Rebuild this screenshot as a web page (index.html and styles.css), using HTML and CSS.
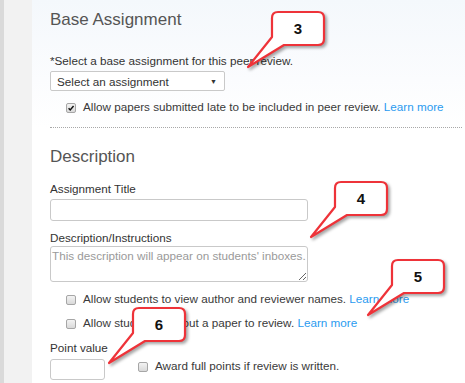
FILE: index.html
```html
<!DOCTYPE html>
<html lang="en">
  <head>
    <meta charset="UTF-8" />
    <meta name="viewport" content="width=device-width, initial-scale=1.0" />
    <link rel="stylesheet" href="styles.css">
  </head>
  <body>
    <div class="page">
      <main class="panel">
        <section class="block block-base">
          <h2>Base Assignment</h2>
          <label class="field-label">*Select a base assignment for this peer review.</label>
          <div class="select">
            <span>Select an assignment</span>
            <span class="caret">&#9660;</span>
          </div>
          <div class="check-row">
            <span class="box is-checked">
              <svg viewBox="0 0 10 10"><path d="M2 5.2 4 7.4 8.2 2.4" /></svg>
            </span>
            <span>Allow papers submitted late to be included in peer review. <a href="#">Learn more</a></span>
          </div>
        </section>

        <section class="block block-desc">
          <h2>Description</h2>
          <label class="field-label" for="title">Assignment Title</label>
          <input id="title" class="text-input title-input" type="text" />
          <label class="field-label desc-label" for="desc">Description/Instructions</label>
          <textarea id="desc" class="text-input desc-input" placeholder="This description will appear on students' inboxes."></textarea>
          <div class="check-row first-option">
            <span class="box"></span>
            <span>Allow students to view author and reviewer names. <a href="#">Learn more</a></span>
          </div>
          <div class="check-row">
            <span class="box"></span>
            <span>Allow students without a paper to review. <a href="#">Learn more</a></span>
          </div>
          <label class="field-label point-label" for="points">Point value</label>
          <div class="point-row">
            <input id="points" class="text-input point-input" type="text" />
            <div class="check-row">
              <span class="box"></span>
              <span>Award full points if review is written.</span>
            </div>
          </div>
        </section>
      </main>

      <!-- annotation callouts -->
      <div class="callout c3">
        <svg viewBox="0 0 90 66"><path d="M34 4H74Q80 4 80 10V31Q80 37 74 37H40L4 59 28 29V10Q28 4 34 4Z" /></svg>
        <span>3</span>
      </div>
      <div class="callout c4">
        <svg viewBox="0 0 90 66"><path d="M34 4H74Q80 4 80 10V31Q80 37 74 37H40L4 59 28 29V10Q28 4 34 4Z" /></svg>
        <span>4</span>
      </div>
      <div class="callout c5">
        <svg viewBox="0 0 90 66"><path d="M34 4H74Q80 4 80 10V31Q80 37 74 37H40L4 59 28 29V10Q28 4 34 4Z" /></svg>
        <span>5</span>
      </div>
      <div class="callout c6">
        <svg viewBox="0 0 90 66"><path d="M34 4H74Q80 4 80 10V31Q80 37 74 37H40L4 59 28 29V10Q28 4 34 4Z" /></svg>
        <span>6</span>
      </div>
    </div>
  </body>
</html>
```

FILE: styles.css
```css
html,
body {
  width: 100%;
  height: 100%;
}

body {
  margin: 0;
  background-color: #f2f2f2;
  font-family: "Liberation Sans", Arial, sans-serif;
  font-size: 11.7px;
  color: #3a3a3a;
  overflow: hidden;
}

.page {
  position: relative;
  display: flex;
  min-height: 100%;
  border-left: 4px solid #dadada;
}

/* Panel */

.panel {
  flex: 1;
  margin-left: 28px;
  padding: 0 3px 0 18px;
  background-image: linear-gradient(to bottom, #f4f8fc 0px, #fbfcfe 80px, white 128px);
}

.block {
  display: flex;
  flex-direction: column;
  align-items: flex-start;
}

.block-base {
  padding: 9px 0 13px;
  border-bottom: 1px dotted #a8a8a8;
}

.block-desc {
  padding-top: 18px;
}

.block h2 {
  margin: 0;
  font-size: 17px;
  line-height: 22px;
  font-weight: normal;
  color: #555;
}

.field-label {
  display: block;
  line-height: 14px;
  color: #333;
}

.block-base .field-label {
  margin-top: 23px;
}

.block-desc .field-label {
  margin-top: 14px;
}

.block-desc .desc-label {
  margin-top: 10px;
}

.block-desc .point-label {
  margin-top: 11px;
}

/* Select */

.select {
  box-sizing: border-box;
  display: flex;
  align-items: center;
  justify-content: space-between;
  width: 175px;
  height: 20px;
  margin-top: 3px;
  padding: 0 7px 0 6px;
  border: 1px solid #c9c9c9;
  border-radius: 2px;
  background-color: white;
  color: #333;
}

.select .caret {
  font-size: 7px;
  color: #333;
}

/* Checkbox rows */

.check-row {
  display: flex;
  align-items: flex-start;
  gap: 7px;
  margin-left: 16px;
  line-height: 14px;
  color: #3a3a3a;
}

.block-base .check-row {
  margin-top: 9px;
}

.block-desc .check-row {
  margin-top: 10px;
}

.check-row a {
  color: #2a9bf0;
  text-decoration: none;
}

.box {
  box-sizing: border-box;
  flex: none;
  width: 10px;
  height: 10px;
  margin-top: 3px;
  border: 1px solid #a6a6a6;
  border-radius: 2px;
  background-image: linear-gradient(to bottom, #f3f3f3, #d9d9d9);
}

.box svg {
  display: block;
  width: 8px;
  height: 8px;
  fill: none;
  stroke: #111;
  stroke-width: 1.8;
}

/* Inputs */

.text-input {
  box-sizing: border-box;
  margin: 3px 0 0;
  padding: 2px 4px;
  border: 1px solid #c9c9c9;
  border-radius: 3px;
  font: inherit;
  color: #333;
  background-color: white;
}

.title-input {
  width: 258px;
  height: 22px;
}

.desc-input {
  width: 258px;
  height: 36px;
  margin-top: 1px;
  padding: 2px 1px;
  line-height: 14px;
}

.desc-input::placeholder {
  color: #9a9a9a;
}

.point-row {
  display: flex;
  align-items: flex-start;
  margin-top: 4px;
}

.point-input {
  width: 55px;
  height: 21px;
  margin: 0;
}

.point-row .check-row {
  margin: 0 0 0 33px;
}

/* Callouts */

.callout {
  position: absolute;
  width: 90px;
  height: 66px;
}

.callout svg {
  display: block;
  width: 90px;
  height: 66px;
  overflow: visible;
  filter: drop-shadow(2px 2px 1.5px rgba(0, 0, 0, 0.35));
}

.callout path {
  fill: white;
  stroke: #ee3339;
  stroke-width: 2.2;
  stroke-linejoin: round;
}

.callout span {
  position: absolute;
  top: 4px;
  left: 28px;
  width: 52px;
  height: 32px;
  display: flex;
  align-items: center;
  justify-content: center;
  font-size: 15px;
  font-weight: bold;
  color: #111;
}

.c3 {
  left: 240px;
  top: 8px;
}

.c4 {
  left: 303px;
  top: 178px;
}

.c5 {
  left: 360px;
  top: 256px;
}

.c6 {
  left: 101px;
  top: 304px;
}
```
